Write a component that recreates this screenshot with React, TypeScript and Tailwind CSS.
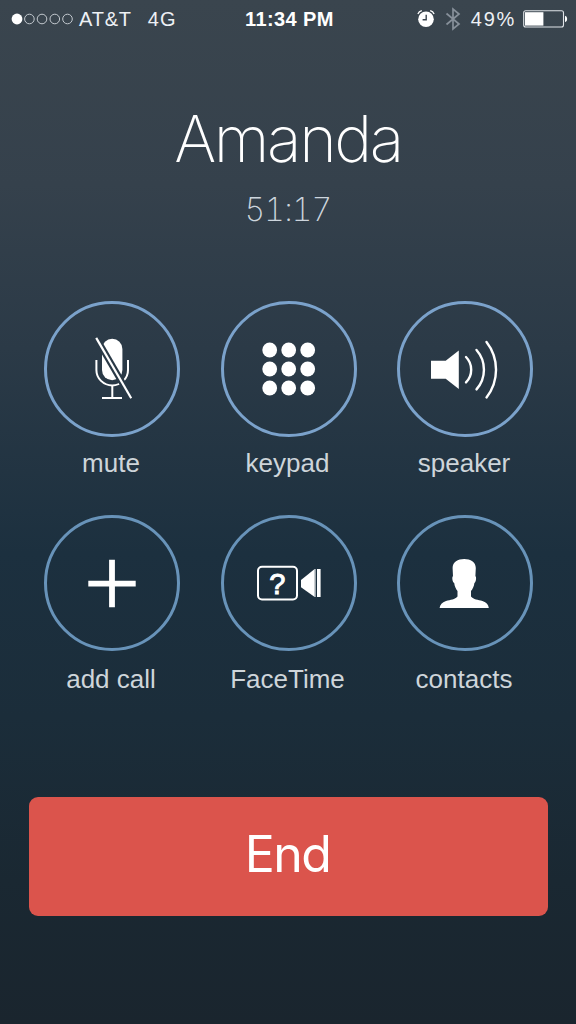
import React from "react";

type CallAction = {
  label: string;
  icon: React.ReactNode;
};

function MuteIcon() {
  return (
    <svg viewBox="0 0 136 136" className="size-full" fill="none">
      <mask id="mute-gap" maskUnits="userSpaceOnUse" x="0" y="0" width="136" height="136">
        <rect width="136" height="136" fill="white" />
        <path d="M48.5 30.7 L90.8 103.3" stroke="black" strokeWidth="6.6" />
      </mask>
      <g mask="url(#mute-gap)">
        <rect x="58" y="37.7" width="20.4" height="41.6" rx="10.2" fill="white" />
        <path
          d="M52.4 59 V69 A15.8 15.4 0 0 0 84 69 V59"
          stroke="white"
          strokeWidth="2"
        />
      </g>
      <path d="M68.3 84.5 V96.7 M58 96.9 H78" stroke="white" strokeWidth="2" />
      <path d="M52.2 36.9 L87.2 97.3" stroke="white" strokeWidth="2.2" />
    </svg>
  );
}

function KeypadIcon() {
  const positions = [0, 1, 2];
  return (
    <svg viewBox="0 0 136 136" className="size-full" fill="white">
      {positions.map((row) =>
        positions.map((col) => (
          <circle
            key={`${row}-${col}`}
            cx={48.7 + col * 19}
            cy={49 + row * 19}
            r="7.4"
          />
        )),
      )}
    </svg>
  );
}

function SpeakerIcon() {
  return (
    <svg viewBox="0 0 136 136" className="size-full" fill="none">
      <path d="M34 59.7 H48.7 L61.8 49.5 V88 L48.7 77.7 H34 Z" fill="white" />
      <g stroke="white" strokeWidth="2.4" strokeLinecap="round">
        <path d="M69 56 A18.1 18.1 0 0 1 69 81.4" />
        <path d="M79.5 49 A29.8 29.8 0 0 1 79.5 88.4" />
        <path d="M89.5 41 A45 45 0 0 1 89.5 96.4" />
      </g>
    </svg>
  );
}

function AddCallIcon() {
  return (
    <svg viewBox="0 0 136 136" className="size-full" fill="none">
      <path
        d="M44.3 68.6 H91.7 M68 44.8 V92.2"
        stroke="white"
        strokeWidth="5.8"
      />
    </svg>
  );
}

function FaceTimeIcon() {
  return (
    <svg viewBox="0 0 136 136" className="size-full" fill="none">
      <rect
        x="37"
        y="51.7"
        width="39"
        height="32.8"
        rx="4"
        stroke="white"
        strokeWidth="2"
      />
      <text
        x="56.2"
        y="78.8"
        textAnchor="middle"
        fill="white"
        stroke="white"
        strokeWidth="1"
        className="font-['Liberation_Sans',sans-serif] text-[29px]"
      >
        ?
      </text>
      <path d="M80 65 L93.7 54 V82 L80 72.3 Z" fill="white" />
      <path d="M94.2 54 V82" stroke="white" strokeWidth="0.8" />
      <path d="M97.8 54 V82" stroke="white" strokeWidth="3.6" />
    </svg>
  );
}

function ContactsIcon() {
  return (
    <svg viewBox="0 0 136 136" className="size-full" fill="white">
      <path d="M67.2 44 C73.5 44 78.8 47 78.8 53 L78.4 61.2 C79.6 61.4 79.2 67 77.4 68 C77 71.5 75.6 74 74 76 V81.4 C76.5 84.6 81 84.5 85.5 86 C89.5 87.4 91.5 89.6 91.8 93 H42.6 C43 89.6 45 87.4 49 86 C53.5 84.5 58 84.6 60.5 81.4 V76 C59 74 57.6 71.5 57.2 68 C55.2 67 54.8 61.4 56 61.2 L55.6 53 C55.6 47 60.9 44 67.2 44 Z" />
    </svg>
  );
}

const topRow: CallAction[] = [
  { label: "mute", icon: <MuteIcon /> },
  { label: "keypad", icon: <KeypadIcon /> },
  { label: "speaker", icon: <SpeakerIcon /> },
];

const bottomRow: CallAction[] = [
  { label: "add call", icon: <AddCallIcon /> },
  { label: "FaceTime", icon: <FaceTimeIcon /> },
  { label: "contacts", icon: <ContactsIcon /> },
];

function StatusBar() {
  return (
    <header className="grid h-[38px] grid-cols-[1fr_auto_1fr] items-center pl-[11px] pr-[8px] text-[20px] leading-none text-[#eef1f5]">
      <div className="flex items-center">
        <svg viewBox="0 0 62 12" className="h-3 w-[62px]" fill="none">
          <circle cx="6" cy="6" r="5.4" fill="white" />
          {[18.4, 31, 43.8, 56.5].map((cx) => (
            <circle key={cx} cx={cx} cy="6" r="4.8" stroke="#c3c9cf" />
          ))}
        </svg>
        <span className="ml-[6px] tracking-[0.8px]">AT&amp;T</span>
        <span className="ml-[16px] tracking-[1px]">4G</span>
      </div>
      <span className="font-bold tracking-[0.4px] text-white">11:34 PM</span>
      <div className="flex items-center justify-end">
        <svg viewBox="0 0 18 18" className="size-[18px]" fill="none">
          <circle cx="9" cy="9.2" r="7.8" fill="white" />
          <path d="M9.2 4.8 V9.8 H5.6" stroke="#3a454f" strokeWidth="1.4" />
          <path
            d="M0.9 4 Q2 1.3 4.8 0.6 M17.1 4 Q16 1.3 13.2 0.6"
            stroke="white"
            strokeWidth="1.3"
          />
        </svg>
        <svg
          viewBox="0 0 16 24"
          className="ml-[10px] h-6 w-4"
          fill="none"
          stroke="#87909a"
          strokeWidth="1.7"
        >
          <path d="M1.5 6.5 L14 17 L8 22 V2 L14 7 L1.5 17.5" />
        </svg>
        <span className="ml-[10px] tracking-[1.7px]">49%</span>
        <svg viewBox="0 0 45 18" className="ml-[7px] h-[18px] w-[45px]" fill="none">
          <rect x="0.7" y="0.8" width="39.8" height="16.2" rx="2" stroke="#dfe3e7" strokeWidth="1.1" />
          <rect x="2" y="2.2" width="18.4" height="13.4" fill="white" />
          <path d="M42 5.8 Q44.2 6.2 44.2 9 T42 12.2 Z" fill="white" />
        </svg>
      </div>
    </header>
  );
}

function ActionButton({ action }: { action: CallAction }) {
  return (
    <button type="button" className="flex w-[136px] flex-col items-center">
      <span className="relative size-[136px] rounded-full border-3 border-inherit">
        <span className="absolute -inset-[3px] block">{action.icon}</span>
      </span>
      <span className="mt-[11px] -ml-[2px] whitespace-nowrap text-[26px] leading-[30px] text-[#ced5da]">
        {action.label}
      </span>
    </button>
  );
}

export default function App() {
  return (
    <main className="flex h-screen w-full flex-col bg-linear-[to_bottom,#3a454e_0%,#35414c_18%,#2b3a47_34%,#1c303f_54%,#1b2d3a_70%,#1a2832_86%,#1a252e_100%] font-['Liberation_Sans',Arial,sans-serif]">
      <StatusBar />
      <section className="mt-[62px] flex flex-col items-center font-['Inter',sans-serif] text-white">
        <h1 className="text-[64px] leading-[78px] font-extralight tracking-[-2.4px]">
          Amanda
        </h1>
        <p className="mt-[12px] text-[32px] leading-[40px] font-extralight tracking-[-0.9px] text-[#cdd5dd] tabular-nums">
          51:17
        </p>
      </section>
      <section className="mt-[71px] flex flex-col gap-[37px] pl-[44px] pr-[43px]">
        <div className="flex justify-between border-[#7ba2cb] [&>button]:border-inherit">
          {topRow.map((action) => (
            <ActionButton key={action.label} action={action} />
          ))}
        </div>
        <div className="flex justify-between border-[#6893b9] [&>button]:border-inherit [&>button>span:last-child]:mt-[13px]">
          {bottomRow.map((action) => (
            <ActionButton key={action.label} action={action} />
          ))}
        </div>
      </section>
      <footer className="mt-[103px] pl-[29px] pr-[28px]">
        <button
          type="button"
          className="flex h-[119px] w-full items-center justify-center rounded-[9px] bg-[#db544c] pr-0.5 pb-[5px] font-['Inter',sans-serif] text-[50px] font-[380] tracking-[-1.6px] text-white"
        >
          End
        </button>
      </footer>
    </main>
  );
}
